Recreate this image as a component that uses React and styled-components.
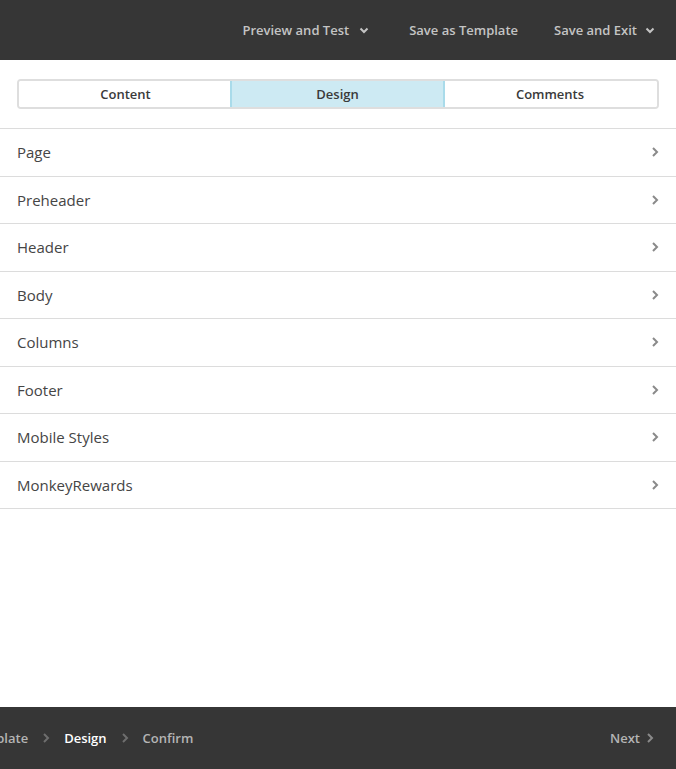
import React from "react";
import styled, { createGlobalStyle } from "styled-components";

const Global = createGlobalStyle`
  html, body { margin: 0; padding: 0; height: 100%; }
  body { font-family: "Open Sans", "Liberation Sans", sans-serif; background: #fff; overflow: hidden; }
  #root { height: 100%; }
`;

const Page = styled.div`
  display: flex;
  flex-direction: column;
  height: 100vh;
`;

const TopBar = styled.header`
  height: 60px;
  flex: 0 0 60px;
  background: #363636;
  display: flex;
  align-items: center;
  justify-content: flex-end;
  padding-right: 21px;
  gap: 40px;
`;

const TopItem = styled.div`
  display: flex;
  align-items: center;
  gap: ${(p) => p.$gap || 8}px;
  color: #c4c4c4;
  font-size: 13px;
  font-weight: 600;
  margin-right: ${(p) => p.$mr || 0}px;
`;

const Main = styled.main`
  flex: 1;
  overflow: hidden;
`;

const TabsWrap = styled.div`
  padding: 19px 17px 19px 17px;
`;

const Tabs = styled.div`
  display: grid;
  grid-template-columns: 213px 211px 1fr;
  height: 30px;
  border: 2px solid #dedede;
  border-radius: 4px;
  box-sizing: border-box;
  overflow: hidden;
`;

const Tab = styled.div`
  display: flex;
  align-items: center;
  justify-content: center;
  font-size: 13px;
  font-weight: 600;
  color: #3a3a3a;
  background: ${(p) => (p.$active ? "#cdeaf3" : "#fff")};
  box-shadow: ${(p) => (p.$active ? "0 0 0 2px #a9dbea" : "none")};
  position: relative;
  z-index: ${(p) => (p.$active ? 1 : 0)};
`;

const List = styled.ul`
  list-style: none;
  margin: 0;
  padding: 0;
  border-top: 1px solid #dcdcdc;
`;

const Row = styled.li`
  height: 46.5px;
  border-bottom: 1px solid #dcdcdc;
  display: flex;
  align-items: center;
  justify-content: space-between;
  padding: 0 17px;
  font-size: 15px;
  color: #454545;
`;

const BottomBar = styled.footer`
  height: 62px;
  flex: 0 0 62px;
  background: #363636;
  display: flex;
  align-items: center;
  justify-content: space-between;
  padding-right: 22px;
  overflow: hidden;
`;

const Crumbs = styled.div`
  display: flex;
  align-items: center;
  margin-left: -31px;
  gap: 14px;
  padding-bottom: 1px;
`;

const Crumb = styled.span`
  font-size: 13px;
  font-weight: 600;
  color: ${(p) => (p.$current ? "#ffffff" : "#b4b4b4")};
  white-space: nowrap;
`;

const NextBtn = styled.div`
  display: flex;
  align-items: center;
  gap: 6px;
  font-size: 13px;
  font-weight: 600;
  color: #b4b4b4;
  padding-bottom: 1px;
`;

const ChevronDown = () => (
  <svg width="10" height="7" viewBox="0 0 10 7">
    <path d="M1.5 1.5 L5 5 L8.5 1.5" fill="none" stroke="#c4c4c4" strokeWidth="2" />
  </svg>
);

const ChevronRight = ({ color = "#8a8a8a", w = 8, h = 12 }) => (
  <svg width={w} height={h} viewBox="0 0 8 12">
    <path d="M2 2 L6 6 L2 10" fill="none" stroke={color} strokeWidth="2" />
  </svg>
);

const rows = ["Page", "Preheader", "Header", "Body", "Columns", "Footer", "Mobile Styles", "MonkeyRewards"];

export default function App() {
  return (
    <Page>
      <Global />
      <TopBar>
        <TopItem $gap={10}>
          Preview and Test <ChevronDown />
        </TopItem>
        <TopItem $mr={-4}>Save as Template</TopItem>
        <TopItem>
          Save and Exit <ChevronDown />
        </TopItem>
      </TopBar>
      <Main>
        <TabsWrap>
          <Tabs>
            <Tab>Content</Tab>
            <Tab $active>Design</Tab>
            <Tab>Comments</Tab>
          </Tabs>
        </TabsWrap>
        <List>
          {rows.map((r) => (
            <Row key={r}>
              {r}
              <ChevronRight />
            </Row>
          ))}
        </List>
      </Main>
      <BottomBar>
        <Crumbs>
          <Crumb>Template</Crumb>
          <ChevronRight color="#6e6e6e" />
          <Crumb $current>Design</Crumb>
          <ChevronRight color="#6e6e6e" />
          <Crumb>Confirm</Crumb>
        </Crumbs>
        <NextBtn>
          Next <ChevronRight color="#8a8a8a" />
        </NextBtn>
      </BottomBar>
    </Page>
  );
}
